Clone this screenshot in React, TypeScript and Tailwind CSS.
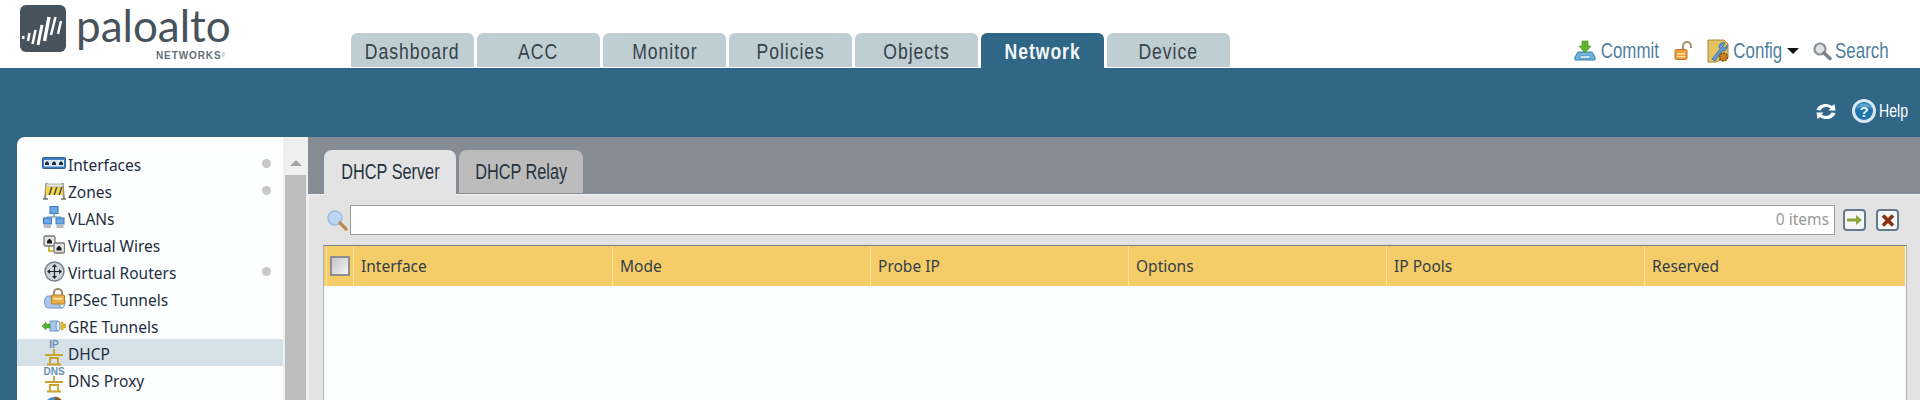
import type { ReactNode } from 'react';

const mainTabs = ['Dashboard', 'ACC', 'Monitor', 'Policies', 'Objects', 'Network', 'Device'];
const columns = ['Mode', 'Probe IP', 'Options', 'IP Pools', 'Reserved'];

function Logo() {
  return (
    <div className="relative w-[351px] h-full shrink-0">
      <svg className="absolute left-[20px] top-[5px]" width="46" height="47" viewBox="0 0 46 47">
        <rect width="46" height="47" rx="6" fill="#47535c" />
        <g stroke="#fff" fill="none">
          <path d="M3.5 31 L3 34" strokeWidth="2.5" />
          <path d="M9.5 28 L8 36" strokeWidth="2.5" />
          <path d="M15.5 25 L12.5 39" strokeWidth="2.5" />
          <path d="M22 20 L18 40" strokeWidth="3" />
          <path d="M29 12 L24.5 36" strokeWidth="3.5" />
          <path d="M35.5 12 L31 30" strokeWidth="2.5" />
          <path d="M41 16 L38 29" strokeWidth="2.5" />
        </g>
      </svg>
      <span className="absolute left-[76px] top-[2px] text-[#47535c] text-[44px] leading-[46px] font-['Lato',sans-serif]">
        paloalto
      </span>
      <span className="absolute left-[156px] top-[50px] text-[#666f76] text-[10px] leading-[12px] font-bold tracking-[0.9px] font-['Liberation_Sans',sans-serif]">
        NETWORKS<sup className="text-[5px] font-normal">©</sup>
      </span>
    </div>
  );
}

function CommitIcon() {
  return (
    <svg width="22" height="22" viewBox="0 0 22 22">
      <path d="M4 12 L1 17 V20 H21 V17 L18 12 Z" fill="#6db3dc" stroke="#3a7ca8" />
      <rect x="6" y="16" width="10" height="2" fill="#fff" stroke="#3a7ca8" strokeWidth="0.5" />
      <path d="M8 1 H14 V6 H17 L11 13 L5 6 H8 Z" fill="#5fb32e" stroke="#3f8a1c" strokeWidth="0.6" />
    </svg>
  );
}

function LockIcon() {
  return (
    <svg width="19" height="20" viewBox="0 0 19 20">
      <path d="M9 9 V5 A4 4 0 0 1 17 5 V7" fill="none" stroke="#a58f70" strokeWidth="2" />
      <rect x="1" y="8.5" width="12" height="10" rx="1.5" fill="#e9a23e" stroke="#b9742a" />
      <rect x="3" y="12" width="8" height="1.5" fill="#fbe0a8" />
      <rect x="3" y="15" width="8" height="1.2" fill="#fbe0a8" />
    </svg>
  );
}

function ConfigIcon() {
  return (
    <svg width="23" height="24" viewBox="0 0 23 24">
      <path d="M1 1 H17 L21 5 V18 L9 23 H1 Z" fill="#e3c262" stroke="#a98a34" />
      <path d="M5 20 L13 10 A4 4 0 0 1 18 4 L15.5 7.5 L18 9 L20 6 A4.5 4.5 0 0 1 15 12 L8 22 Z" fill="#5d9bd6" stroke="#2f659f" strokeWidth="0.7" />
      <circle cx="16.5" cy="18" r="4" fill="#c9821e" stroke="#7f4d10" strokeDasharray="2 1" strokeWidth="1.6" />
    </svg>
  );
}

function SearchGrayIcon() {
  return (
    <svg width="20" height="20" viewBox="0 0 20 20">
      <circle cx="8" cy="8" r="5.5" fill="#dfe3e6" stroke="#8b9197" strokeWidth="2.2" />
      <path d="M12 12 L18 17.5" stroke="#7e8286" strokeWidth="3.5" strokeLinecap="round" />
    </svg>
  );
}

function RefreshIcon() {
  return (
    <svg width="20" height="17" viewBox="0 0 20 17">
      <path d="M0.5 7 C2 1 11 -1 16 3 L18.5 1 L19.5 7.5 H12.5 L14.5 5.5 C11 3 6 4 4.5 7.5 Z" fill="#fff" />
      <path d="M19.5 10 C18 16 9 18 4 14 L1.5 16 L0.5 9.5 H7.5 L5.5 11.5 C9 14 14 13 15.5 9.5 Z" fill="#fff" />
    </svg>
  );
}

function HelpIcon() {
  return (
    <svg width="24" height="24" viewBox="0 0 24 24">
      <circle cx="12" cy="12" r="12" fill="#d9e7f0" />
      <circle cx="12" cy="12" r="9" fill="#1f76ad" />
      <path d="M4 10 A8.5 8.5 0 0 1 20 10 C15 7 9 7 4 10 Z" fill="#5fa3cf" />
      <text x="12" y="17.5" textAnchor="middle" fontSize="15" fontWeight="700" fill="#e4f0f8" fontFamily="Liberation Sans, sans-serif">
        ?
      </text>
    </svg>
  );
}

function InterfacesIcon() {
  return (
    <svg width="24" height="14" viewBox="0 0 24 14">
      <rect x="0.5" y="0.5" width="23" height="11" rx="1" fill="#3f7fc0" stroke="#2b5f96" />
      <rect x="2" y="3" width="20" height="6.5" fill="#dfe9f2" />
      <path d="M5 4 L7 6 V8 H3 V6 Z M12 4 L14 6 V8 H10 V6 Z M19 4 L21 6 V8 H17 V6 Z" fill="#1d2b3a" />
    </svg>
  );
}

function ZonesIcon() {
  return (
    <svg width="23" height="18" viewBox="0 0 23 18">
      <path d="M3.5 1 L2 17 M19.5 1 L21 17" stroke="#8d8d86" strokeWidth="2" />
      <path d="M0 17 H5 M18 17 H23" stroke="#77776f" strokeWidth="1.6" />
      <rect x="3" y="2" width="17" height="3" fill="#e6e6de" stroke="#8a8a82" strokeWidth="0.6" />
      <rect x="3" y="5" width="17" height="8" fill="#f2d64c" />
      <path d="M5.5 13 L8 5 H9.5 L7 13 Z M10.5 13 L13 5 H14.5 L12 13 Z M15.5 13 L18 5 H19.5 L17 13 Z" fill="#4a4636" />
    </svg>
  );
}

function VlansIcon() {
  return (
    <svg width="22" height="23" viewBox="0 0 22 23">
      <rect x="7" y="0.5" width="8" height="7" fill="#6ba8e8" stroke="#3877b8" />
      <path d="M11 7 V11 M4 11 H18 M4 11 V13 M18 11 V13" stroke="#5d87ad" strokeWidth="1.2" fill="none" />
      <rect x="0.5" y="12" width="8" height="6" fill="#6ba8e8" stroke="#3877b8" />
      <rect x="13" y="12" width="8" height="6" fill="#6ba8e8" stroke="#3877b8" />
      <rect x="1" y="18.5" width="7" height="3.5" fill="#b8bcc2" />
      <rect x="13.5" y="18.5" width="7" height="3.5" fill="#b8bcc2" />
    </svg>
  );
}

function WiresIcon() {
  return (
    <svg width="22" height="20" viewBox="0 0 22 20">
      <path d="M6 10 V16 H11" fill="none" stroke="#d4b73a" strokeWidth="2" />
      <rect x="1" y="1" width="11" height="10" rx="1.5" fill="#e4e4e4" stroke="#77777a" strokeWidth="1.3" />
      <rect x="11" y="8" width="10.5" height="10" rx="1.5" fill="#e4e4e4" stroke="#77777a" strokeWidth="1.3" />
      <path d="M6.5 3.5 L9 6 V8.5 H4 V6 Z M16 10.5 L18.5 13 V15.5 H13.5 V13 Z" fill="#1e1e20" />
    </svg>
  );
}

function RoutersIcon() {
  return (
    <svg width="21" height="21" viewBox="0 0 21 21">
      <circle cx="10.5" cy="10.5" r="9.5" fill="#cfd6de" stroke="#77818c" strokeWidth="1.4" />
      <path d="M10.5 3 L13 6 H8 Z M10.5 18 L13 15 H8 Z M3 10.5 L6 8 V13 Z M18 10.5 L15 8 V13 Z" fill="#22282f" />
      <path d="M10.5 5 V16 M5 10.5 H16" stroke="#22282f" strokeWidth="1.2" />
    </svg>
  );
}

function IpsecIcon() {
  return (
    <svg width="23" height="22" viewBox="0 0 23 22">
      <path d="M5 8 H19 V20 H5 A3.5 6 0 0 1 5 8 Z" fill="#a9c6ea" stroke="#6f95c4" />
      <ellipse cx="19" cy="14" rx="3" ry="6" fill="#dce8f6" stroke="#6f95c4" />
      <path d="M11 7 V4.5 A4 3.5 0 0 1 19 4.5 V7" fill="none" stroke="#9d8a72" strokeWidth="2" />
      <rect x="8.5" y="7" width="13" height="9" rx="1" fill="#e9b048" stroke="#b7812a" />
      <rect x="10.5" y="10" width="9" height="1.5" fill="#fbe7ba" />
    </svg>
  );
}

function GreIcon() {
  return (
    <svg width="24" height="14" viewBox="0 0 24 14">
      <path d="M8 2 H16 V12 H8 Z" fill="#a9c6ea" stroke="#6f95c4" />
      <ellipse cx="16" cy="7" rx="2" ry="5" fill="#dce8f6" stroke="#6f95c4" />
      <path d="M0 7 L4 3 V5 H8 V9 H4 V11 Z" fill="#55b035" stroke="#3b8a20" strokeWidth="0.5" />
      <path d="M19 3 H21 V5 H23.5 V9 H21 V11 H19 Z" fill="#e9b72e" stroke="#b88e1c" strokeWidth="0.5" />
    </svg>
  );
}

function LabelNetIcon({ label }: { label: string }) {
  return (
    <div className="relative w-[22px] h-[26px]">
      <span className="absolute inset-x-0 top-0 text-center text-[10px] leading-[9px] font-bold text-[#6690b2] font-['Liberation_Sans',sans-serif]">
        {label}
      </span>
      <svg className="absolute left-0 top-[9px]" width="22" height="17" viewBox="0 0 22 17">
        <path d="M2 6 H20 M11 0 V5 M7 9 V15.5 H15 V9 M6 9 H16 M4 15.5 H18" stroke="#c9a22c" strokeWidth="1.8" fill="none" />
      </svg>
    </div>
  );
}

function GlobeIcon() {
  return (
    <svg width="22" height="22" viewBox="0 0 22 22">
      <circle cx="11" cy="11" r="10" fill="#4a90d0" />
      <path d="M4 5 C8 3 10 6 9 9 C7 12 3 11 2 9 Z" fill="#4ba13a" />
      <path d="M11 1 C15 0 20 4 20 7 L13 6 Z" fill="#8a5a2a" />
    </svg>
  );
}

interface NavItem {
  label?: string;
  icon: ReactNode;
  dot?: boolean;
  active?: boolean;
}

const navItems: NavItem[] = [
  { label: 'Interfaces', icon: <InterfacesIcon />, dot: true },
  { label: 'Zones', icon: <ZonesIcon />, dot: true },
  { label: 'VLANs', icon: <VlansIcon /> },
  { label: 'Virtual Wires', icon: <WiresIcon /> },
  { label: 'Virtual Routers', icon: <RoutersIcon />, dot: true },
  { label: 'IPSec Tunnels', icon: <IpsecIcon /> },
  { label: 'GRE Tunnels', icon: <GreIcon /> },
  { label: 'DHCP', icon: <LabelNetIcon label="IP" />, active: true },
  { label: 'DNS Proxy', icon: <LabelNetIcon label="DNS" /> },
  { icon: <GlobeIcon /> },
];

function Sidebar() {
  return (
    <div className="w-[291px] shrink-0 flex bg-white rounded-tl-[8px] overflow-hidden">
      <div className="flex-1 pt-[13px] font-['Noto_Sans',sans-serif] text-[15.5px] text-[#1f2f3f]">
        {navItems.map((item, i) => (
          <div
            key={i}
            className={`h-[27px] flex items-center pl-[24px] pr-[12px] ${item.active ? 'bg-[#d5e0e7]' : 'bg-[#fdfefe]'}`}
          >
            <div className="w-[26px] h-[27px] flex items-center justify-center shrink-0">{item.icon}</div>
            {item.label && <span className="ml-[1px] pt-[4px]">{item.label}</span>}
            {item.dot && <span className="ml-auto w-[9px] h-[9px] rounded-full bg-[#c8c8c8]" />}
          </div>
        ))}
      </div>
      <div className="w-[25px] shrink-0 bg-[#efefef] flex flex-col items-center pt-[23px]">
        <span className="w-0 h-0 border-x-[6px] border-x-transparent border-b-[6px] border-b-[#a5a5a5]" />
        <div className="mt-[9px] w-[21px] flex-1 bg-[#bdbdbd]" />
      </div>
    </div>
  );
}

function ToolButton({ children }: { children: ReactNode }) {
  return (
    <div className="w-[23px] h-[22px] rounded-[4px] border-2 border-[#64798a] bg-[#f4f7f7] flex items-center justify-center">
      {children}
    </div>
  );
}

function Content() {
  return (
    <div className="flex-1 flex flex-col bg-[#858c94] min-w-0">
      <div className="h-[57px] pl-[16px] pt-[13px] flex items-start gap-[3px] font-['Liberation_Sans',sans-serif] text-[22px] leading-[22px] text-[#26323e]">
        <div className="w-[132px] h-[45px] bg-[#e3e3e3] rounded-t-[8px] pt-[11px] flex justify-center whitespace-nowrap z-10">
          <span className="inline-block scale-x-[0.74]">DHCP Server</span>
        </div>
        <div className="w-[124px] h-[43px] bg-[#bcbcbc] rounded-t-[8px] pt-[11px] flex justify-center whitespace-nowrap">
          <span className="inline-block scale-x-[0.74]">DHCP Relay</span>
        </div>
      </div>
      <div className="flex-1 bg-[#e3e3e3] border-l border-t border-[#f2f2f2] pl-[14px] pr-[13px] pt-[10px] flex flex-col">
        <div className="flex items-center h-[30px]">
          <svg className="ml-[4px] shrink-0" width="21" height="21" viewBox="0 0 21 21">
            <circle cx="8" cy="8" r="7" fill="#bcd6f2" stroke="#9dbbdc" strokeWidth="1.5" />
            <path d="M13 13 L19 19" stroke="#bd8a54" strokeWidth="3.2" strokeLinecap="round" />
          </svg>
          <div className="ml-[2px] flex-1 h-[30px] bg-white border border-[#999] flex items-center justify-end pr-[5px] text-[15.5px] text-[#999] font-['Noto_Sans',sans-serif]">
            0 items
          </div>
          <div className="ml-[8px] mr-[8px] flex gap-[10px]">
            <ToolButton>
              <svg width="15" height="12" viewBox="0 0 15 12">
                <path d="M0 4.5 H9 V1 L15 6 L9 11 V7.5 H0 Z" fill="#8aa83a" />
              </svg>
            </ToolButton>
            <ToolButton>
              <svg width="14" height="13" viewBox="0 0 14 13">
                <path d="M2 1.5 L12 11.5 M12 1.5 L2 11.5" stroke="#8a3114" strokeWidth="3.6" />
              </svg>
            </ToolButton>
          </div>
        </div>
        <div className="mt-[10px] flex-1 border-t border-l border-r border-t-[#74808a] border-x-[#aab2ba] bg-[#fbfdfc] font-['Noto_Sans',sans-serif] text-[15.5px] text-[#333e48]">
          <div className="h-[40px] bg-[#f5cd68] flex mr-px">
            <div className="w-[28px] ml-[2px] shrink-0 flex items-center justify-center border-x border-[#fbe29c]">
              <span className="w-[20px] h-[20px] border-[2px] border-[#8e8e8e] bg-gradient-to-br from-[#c4c4c4] to-[#f5f5f5]" />
            </div>
            <div className="w-[259px] shrink-0 flex items-center pl-[7px] pt-[2px] border-r border-[#fbe29c]">Interface</div>
            {columns.map((c, i) => (
              <div
                key={c}
                className={`flex items-center pl-[7px] pt-[2px] ${i === columns.length - 1 ? 'flex-1' : 'w-[258px] shrink-0 border-r border-[#fbe29c]'}`}
              >
                {c}
              </div>
            ))}
          </div>
        </div>
      </div>
    </div>
  );
}

export default function App() {
  return (
    <div className="h-[400px] overflow-hidden flex flex-col bg-[#306786]">
      <div className="h-[68px] shrink-0 bg-white flex">
        <Logo />
        <div className="flex items-end gap-[3px] font-['Liberation_Sans',sans-serif] text-[22px] leading-[22px] tracking-[1.2px]">
          {mainTabs.map((t) => {
            const active = t === 'Network';
            return (
              <div
                key={t}
                className={`w-[123px] rounded-t-[6px] pt-[8px] flex justify-center whitespace-nowrap ${active ? 'h-[35px] bg-[#306786] text-[#f2f6f8] font-bold' : 'h-[34px] mb-px bg-[#bfced3] text-[#37424b]'}`}
              >
                <span className="inline-block scale-x-[0.8]">{t}</span>
              </div>
            );
          })}
        </div>
        <div className="ml-auto flex items-center h-[34px] mt-[34px] pr-[32px] font-['Liberation_Sans',sans-serif] text-[22px] leading-[22px] text-[#4f7fa0]">
          <CommitIcon />
          <span className="ml-[4px] w-[59px] flex justify-center whitespace-nowrap">
            <span className="inline-block scale-x-[0.77]">Commit</span>
          </span>
          <span className="ml-[15px]"><LockIcon /></span>
          <span className="ml-[14px]"><ConfigIcon /></span>
          <span className="ml-[4px] w-[48px] flex justify-center whitespace-nowrap">
            <span className="inline-block scale-x-[0.77]">Config</span>
          </span>
          <span className="ml-[5px] w-0 h-0 border-x-[6px] border-x-transparent border-t-[6px] border-t-[#111]" />
          <span className="ml-[13px]"><SearchGrayIcon /></span>
          <span className="ml-[3px] w-[53px] flex justify-center whitespace-nowrap">
            <span className="inline-block scale-x-[0.77]">Search</span>
          </span>
        </div>
      </div>
      <div className="h-[69px] shrink-0 flex items-end justify-end pb-[14px] pr-[12px] font-['Liberation_Sans',sans-serif] text-[19px] leading-[24px] text-white">
        <div className="flex items-center">
          <RefreshIcon />
          <span className="ml-[16px]"><HelpIcon /></span>
          <span className="ml-[3px] w-[29px] flex justify-center whitespace-nowrap">
            <span className="inline-block scale-x-[0.74]">Help</span>
          </span>
        </div>
      </div>
      <div className="flex-1 flex pl-[17px] min-h-0">
        <Sidebar />
        <Content />
      </div>
    </div>
  );
}
